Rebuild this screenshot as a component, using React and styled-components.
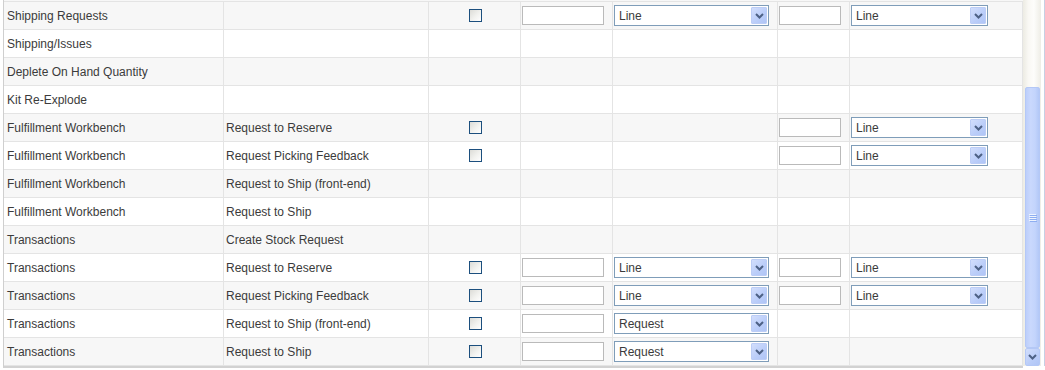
import React from "react";
import styled, { createGlobalStyle } from "styled-components";

const rows = [
  { area: "Shipping Requests", action: "", check: true, qty: true, level: "Line", qty2: true, level2: "Line" },
  { area: "Shipping/Issues" },
  { area: "Deplete On Hand Quantity" },
  { area: "Kit Re-Explode" },
  { area: "Fulfillment Workbench", action: "Request to Reserve", check: true, qty2: true, level2: "Line" },
  { area: "Fulfillment Workbench", action: "Request Picking Feedback", check: true, qty2: true, level2: "Line" },
  { area: "Fulfillment Workbench", action: "Request to Ship (front-end)" },
  { area: "Fulfillment Workbench", action: "Request to Ship" },
  { area: "Transactions", action: "Create Stock Request" },
  { area: "Transactions", action: "Request to Reserve", check: true, qty: true, level: "Line", qty2: true, level2: "Line" },
  { area: "Transactions", action: "Request Picking Feedback", check: true, qty: true, level: "Line", qty2: true, level2: "Line" },
  { area: "Transactions", action: "Request to Ship (front-end)", check: true, qty: true, level: "Request" },
  { area: "Transactions", action: "Request to Ship", check: true, qty: true, level: "Request" },
];

const Chevron = () => (
  <svg width="9" height="6" viewBox="0 0 9 6">
    <path d="M1 1 L4.5 4.5 L8 1" fill="none" stroke="#4d6185" strokeWidth="2" />
  </svg>
);

const DropDown = ({ value, width }) => (
  <SelectBox $width={width}>
    <SelectValue>{value}</SelectValue>
    <DropButton>
      <Chevron />
    </DropButton>
  </SelectBox>
);

const App = () => {
  return (
    <Page>
      <GlobalStyle />
      <Panel>
        <TopStub />
        <Table>
          {rows.map((row, i) => (
            <Row key={i} $alt={i % 2 === 0}>
              <TextCell $pad={3}>{row.area}</TextCell>
              <TextCell $pad={2}>{row.action}</TextCell>
              <Cell $center>{row.check && <CheckBox type="checkbox" />}</Cell>
              <Cell>{row.qty && <QtyInput $width={82} />}</Cell>
              <Cell>{row.level && <DropDown value={row.level} width={155} />}</Cell>
              <Cell>{row.qty2 && <QtyInput $width={62} />}</Cell>
              <Cell>{row.level2 && <DropDown value={row.level2} width={137} />}</Cell>
            </Row>
          ))}
        </Table>
      </Panel>
      <ScrollBar>
        <Track />
        <Thumb>
          <Grip>
            <span />
            <span />
            <span />
            <span />
          </Grip>
        </Thumb>
        <ArrowButton>
          <Chevron />
        </ArrowButton>
      </ScrollBar>
      <Edge />
    </Page>
  );
};

export default App;

const GlobalStyle = createGlobalStyle`
  html, body {
    margin: 0;
    padding: 0;
    background: #ffffff;
  }

  body {
    font-family: "Liberation Sans", Arial, sans-serif;
    font-size: 12px;
    color: #3b3b3b;
  }
`;

const Page = styled.div`
  display: flex;
  width: 1045px;
  height: 370px;
  overflow: hidden;
  background: #ffffff;
`;

const Panel = styled.div`
  display: flex;
  flex-direction: column;
  margin-left: 3px;
  width: 1020px;
  height: 368px;
  border-left: 1px solid #cfcfcf;
  border-bottom: 2px solid #d2d2d2;
  box-sizing: border-box;
`;

const TopStub = styled.div`
  height: 1px;
  background: #f7f7f7;
`;

const Table = styled.div`
  display: flex;
  flex-direction: column;
  border-top: 1px solid #e4e4e4;
`;

const Row = styled.div`
  display: grid;
  grid-template-columns: 220px 205px 92px 92px 165px 72px 173px;
  height: 28px;
  box-sizing: border-box;
  border-bottom: 1px solid #e4e4e4;
  background: ${({ $alt }) => ($alt ? "#f7f7f7" : "#ffffff")};
`;

const Cell = styled.div`
  display: flex;
  align-items: center;
  justify-content: ${({ $center }) => ($center ? "center" : "flex-start")};
  padding-left: ${({ $center }) => ($center ? "0" : "1px")};
  border-right: 1px solid #e4e4e4;
  box-sizing: border-box;
  min-width: 0;
`;

const TextCell = styled(Cell)`
  padding-left: ${({ $pad }) => $pad}px;
  white-space: nowrap;
  line-height: 14px;
`;

const CheckBox = styled.input`
  appearance: none;
  margin: 0 0 0 1px;
  width: 13px;
  height: 13px;
  border: 1px solid #1c4f7e;
  background: linear-gradient(135deg, #dcdcd7 0%, #f2f2ef 55%, #ffffff 100%);
  box-sizing: border-box;
`;

const QtyInput = styled.div`
  width: ${({ $width }) => $width}px;
  height: 19px;
  border: 1px solid #bababa;
  background: #ffffff;
  box-sizing: border-box;
`;

const SelectBox = styled.div`
  display: flex;
  align-items: center;
  justify-content: space-between;
  width: ${({ $width }) => $width}px;
  height: 21px;
  padding: 0 1px 0 4px;
  border: 1px solid #7f9db9;
  background: #ffffff;
  box-sizing: border-box;
`;

const SelectValue = styled.span`
  font-size: 12px;
  color: #3b3b3b;
  line-height: 14px;
`;

const DropButton = styled.div`
  display: flex;
  align-items: center;
  justify-content: center;
  width: 16px;
  height: 17px;
  border: 1px solid #bccdf6;
  border-radius: 1px;
  background: linear-gradient(135deg, #d2defc 0%, #bacdf9 60%, #b0c5f6 100%);
  box-sizing: border-box;
`;

const ScrollBar = styled.div`
  display: flex;
  flex-direction: column;
  width: 18px;
  height: 366px;
  padding: 0 1px 0 2px;
  box-sizing: border-box;
  background: linear-gradient(to right, #ecebe3 0%, #f9f8f4 30%, #fdfdfb 60%, #eeede6 100%);
`;

const Track = styled.div`
  height: 87px;
  flex-shrink: 0;
`;

const Thumb = styled.div`
  display: flex;
  align-items: center;
  justify-content: center;
  height: 261px;
  flex-shrink: 0;
  border: 1px solid #b4c8f6;
  border-radius: 2px;
  background: linear-gradient(to right, #bccefb 0%, #c9d8fd 35%, #c3d4fc 70%, #b3c8f7 100%);
  box-sizing: border-box;
`;

const Grip = styled.div`
  display: flex;
  flex-direction: column;
  gap: 1px;

  span {
    display: block;
    width: 7px;
    height: 1px;
    background: #eef4fe;
    box-shadow: 1px 1px 0 #8eaef1;
  }
`;

const ArrowButton = styled.div`
  display: flex;
  align-items: center;
  justify-content: center;
  height: 18px;
  flex-shrink: 0;
  border: 1px solid #b4c8f6;
  border-radius: 2px;
  background: linear-gradient(135deg, #d2defc 0%, #bacdf9 60%, #b0c5f6 100%);
  box-sizing: border-box;
`;

const Edge = styled.div`
  width: 4px;
  height: 366px;
  border-right: 1px solid #c6d0e4;
  box-sizing: border-box;
`;
